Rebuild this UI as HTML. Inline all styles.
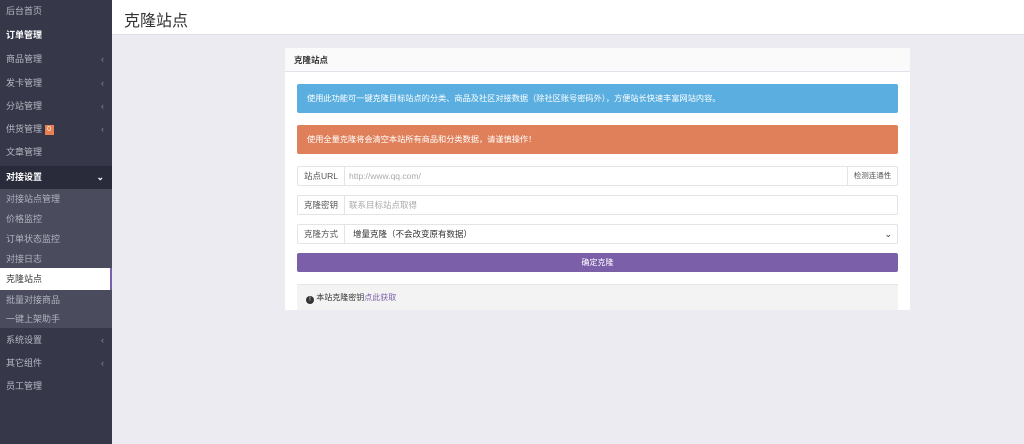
<!DOCTYPE html>
<html><head><meta charset="utf-8"><style>
*{box-sizing:border-box;margin:0;padding:0}
body{width:1024px;height:444px;overflow:hidden;background:#ecebf2;font-family:"Liberation Sans","Noto Sans CJK SC",sans-serif;position:relative}
.sb{position:absolute;left:0;top:0;width:112px;height:444px;background:#363849}
.it{position:absolute;left:0;width:112px;height:23px;line-height:23px;padding-left:6px;font-size:9px;color:#b8b9c4}
.arr{position:absolute;right:8px;top:0;color:#8a8b99;font-size:9px}
.sub{position:absolute;left:0;top:189px;width:112px;height:139px;background:#4a4b5d}
.si{position:absolute;left:0;width:112px;height:20px;line-height:20px;padding-left:6px;font-size:9px;color:#b3b4c0}
.top{position:absolute;left:112px;top:0;right:0;height:35px;background:#fff;border-bottom:1px solid #e0dfe8}
.top h1{font-weight:normal;font-size:16px;color:#333;position:absolute;left:12px;top:7px}
.panel{position:absolute;left:285px;top:48px;width:625px;height:262px;background:#fff}
.ph{height:24px;line-height:24px;padding-left:9px;font-size:8.5px;font-weight:bold;color:#333;background:#fafafa;border-bottom:1px solid #e3e2ea}
.al{position:absolute;left:12px;width:601px;height:29px;line-height:29px;padding-left:10px;font-size:8.2px;color:#fff;border-radius:2px}
.row{position:absolute;left:12px;width:601px;height:20px;border:1px solid #e3e3e8;font-size:8.5px;line-height:18px;border-radius:2px}
.lab{position:absolute;left:0;top:0;width:47px;height:18px;border-right:1px solid #e3e3e8;text-align:center;color:#555}
.val{position:absolute;left:51px;top:0;color:#aaa}
</style></head><body>
<div class="sb">
<div class="it" style="top:0">后台首页</div>
<div class="it" style="top:24px;color:#fff;font-weight:bold">订单管理</div>
<div class="it" style="top:48px">商品管理<span class="arr">‹</span></div>
<div class="it" style="top:72px">发卡管理<span class="arr">‹</span></div>
<div class="it" style="top:95px">分站管理<span class="arr">‹</span></div>
<div class="it" style="top:118px">供货管理 <span style="display:inline-block;width:9px;height:10px;background:#e8804f;color:#fff;font-size:7px;line-height:10px;text-align:center;vertical-align:middle">0</span><span class="arr">‹</span></div>
<div class="it" style="top:141px">文章管理</div>
<div class="it" style="top:166px;background:#2a2b3a;color:#fff;font-weight:bold">对接设置<span class="arr" style="color:#fff">⌄</span></div>
<div class="sub"></div>
<div class="si" style="top:189px">对接站点管理</div>
<div class="si" style="top:209px">价格监控</div>
<div class="si" style="top:229px">订单状态监控</div>
<div class="si" style="top:249px">对接日志</div>
<div class="si" style="top:268px;height:22px;line-height:22px;background:#fff;color:#333;border-right:2px solid #7b5fa9">克隆站点</div>
<div class="si" style="top:290px">批量对接商品</div>
<div class="si" style="top:309px">一键上架助手</div>
<div class="it" style="top:329px">系统设置<span class="arr">‹</span></div>
<div class="it" style="top:352px">其它组件<span class="arr">‹</span></div>
<div class="it" style="top:375px">员工管理</div>
</div>
<div class="top"><h1>克隆站点</h1></div>
<div class="panel">
<div class="ph">克隆站点</div>
<div class="al" style="top:36px;background:#5aafe0">使用此功能可一键克隆目标站点的分类、商品及社区对接数据（除社区账号密码外），方便站长快速丰富网站内容。</div>
<div class="al" style="top:77px;background:#e0805a">使用全量克隆将会清空本站所有商品和分类数据，请谨慎操作！</div>
<div class="row" style="top:118px"><div class="lab">站点URL</div><div class="val">http://www.qq.com/</div><div style="position:absolute;right:0;top:0;width:50px;height:18px;border-left:1px solid #e3e3e8;text-align:center;color:#555;font-size:7.5px">检测连通性</div></div>
<div class="row" style="top:147px"><div class="lab">克隆密钥</div><div class="val">联系目标站点取得</div></div>
<div class="row" style="top:176px"><div class="lab">克隆方式</div><div class="val" style="left:55px;color:#333">增量克隆（不会改变原有数据）</div><div style="position:absolute;right:5px;top:0;font-size:9px;color:#333">⌄</div></div>
<div style="position:absolute;left:12px;top:205px;width:601px;height:19px;background:#7b5fa9;border-radius:2px;color:#fff;font-size:8px;line-height:19px;text-align:center">确定克隆</div>
<div style="position:absolute;left:12px;top:236px;width:601px;height:26px;background:#f3f3f3;border-top:1px solid #e6e6e6;font-size:8px;line-height:26px;padding-left:9px;color:#333"><span style="display:inline-block;width:8px;height:8px;border-radius:50%;background:#333;color:#fff;font-size:6px;line-height:8px;text-align:center;vertical-align:-1px">!</span> 本站克隆密钥<span style="color:#7b5fa9">点此获取</span></div>
</div>
</body></html>
